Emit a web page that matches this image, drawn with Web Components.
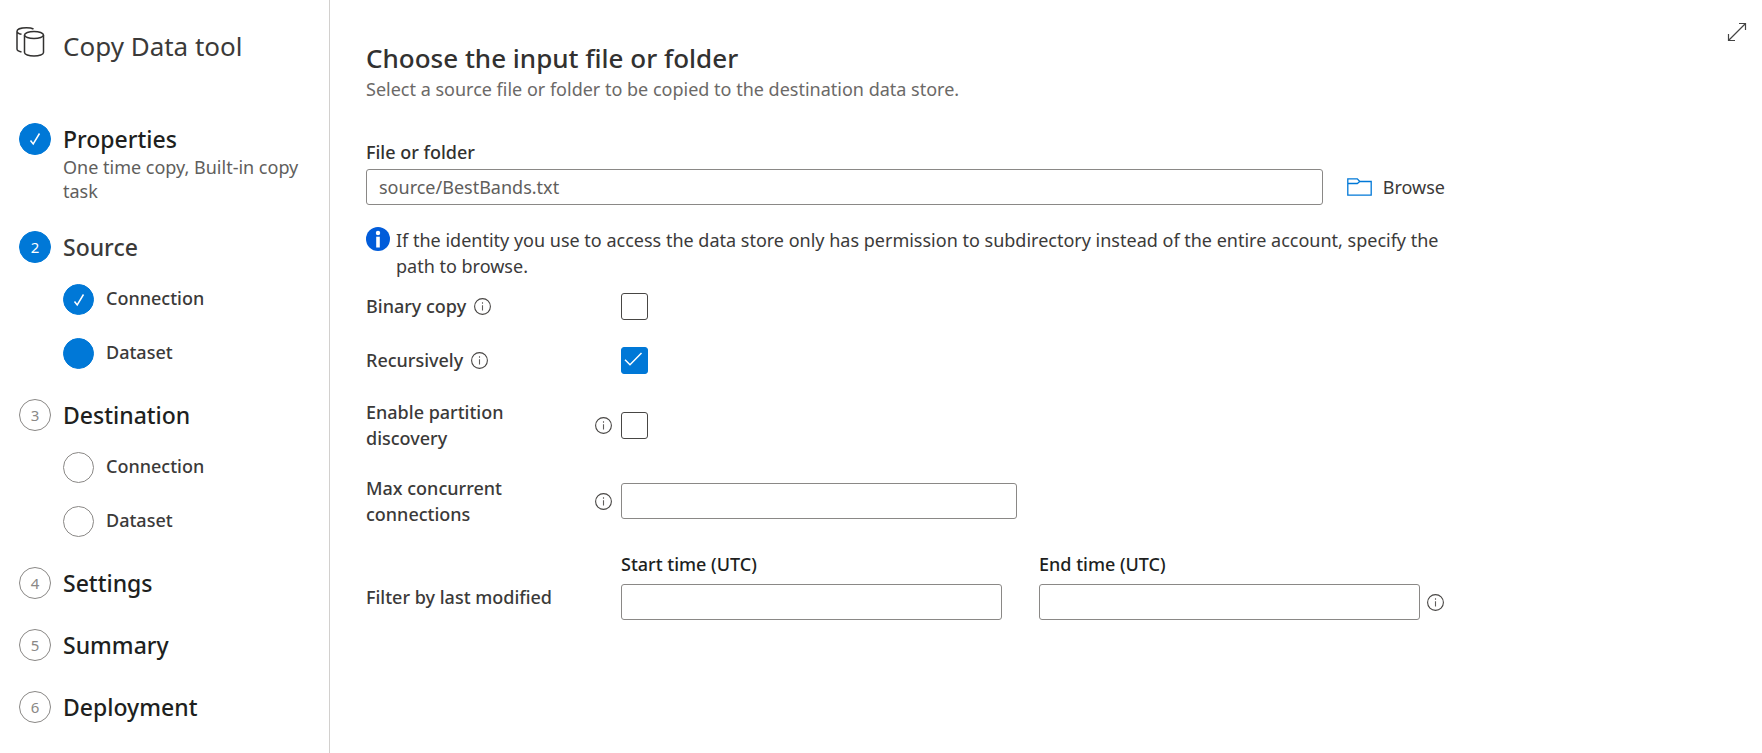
<!DOCTYPE html>
<html lang="en">
<head>
<meta charset="utf-8">
<title>Copy Data tool</title>
<style>
  html, body { margin: 0; background: #fff; }
  body {
    font-family: "Noto Sans", "Open Sans", sans-serif;
    font-size: 18px;
    line-height: 26px;
    color: #3b3a39;
  }
</style>
</head>
<body>
<copy-data-tool>
  <wizard-nav slot="nav" heading="Copy Data tool">
    <wizard-step number="1" state="done" heading="Properties" note="One time copy, Built-in copy task"></wizard-step>
    <wizard-step number="2" state="current" heading="Source">
      <wizard-substep state="done">Connection</wizard-substep>
      <wizard-substep state="current">Dataset</wizard-substep>
    </wizard-step>
    <wizard-step number="3" heading="Destination">
      <wizard-substep>Connection</wizard-substep>
      <wizard-substep>Dataset</wizard-substep>
    </wizard-step>
    <wizard-step number="4" heading="Settings"></wizard-step>
    <wizard-step number="5" heading="Summary"></wizard-step>
    <wizard-step number="6" heading="Deployment"></wizard-step>
  </wizard-nav>

  <page-heading heading="Choose the input file or folder">Select a source file or folder to be copied to the destination data store.</page-heading>
  <path-field label="File or folder" value="source/BestBands.txt"></path-field>
  <info-note>If the identity you use to access the data store only has permission to subdirectory instead of the entire account, specify the path to browse.</info-note>
  <option-rows>
    <check-row label="Binary copy"></check-row>
    <check-row label="Recursively" checked></check-row>
    <check-row label="Enable partition discovery"></check-row>
    <text-row label="Max concurrent connections"></text-row>
    <time-range-row label="Filter by last modified"></time-range-row>
  </option-rows>
</copy-data-tool>

<script>
const TICK = `<svg viewBox="0 0 12 14" width="12" height="14" fill="none" stroke="currentColor" aria-hidden="true"><path d="M1.500 8.500 4.200 12 10.500 1.500" stroke-width="1.500"/></svg>`;
const esc = s => (s || '').replace(/&/g, '&amp;').replace(/</g, '&lt;').replace(/"/g, '&quot;');

class Base extends HTMLElement {
  connectedCallback() {
    if (this.shadowRoot) return;
    this.attachShadow({ mode: 'open' }).innerHTML =
      `<style>*{box-sizing:border-box}:host{display:block;box-sizing:border-box}</style>` + this.render();
  }
  attr(name) { return esc(this.getAttribute(name)); }
}

/* Shared look of a text box */
const INPUT = `
  input[type=text] {
    width: 100%; height: 36px; margin: 0; padding: 0 12px;
    border: 1px solid #8a8886; border-radius: 3px; background: #fff;
    font: inherit; font-weight: 400; color: #605e5c; display: block;
  }`;

/* Shared label column: text with an optional hint icon */
const ROW = `
  :host { display: grid; grid-template-columns: 255px minmax(0, 1fr); align-items: center; font-weight: 500; }
  .name { display: flex; align-items: center; gap: 8px; padding-right: 9px; }
  hint-icon { flex: none; }`;

customElements.define('copy-data-tool', class extends Base {
  render() {
    return `<style>
      :host { display: flex; min-height: 100vh; }
      main { flex: 1; min-width: 0; padding: 41px 16px 42px 36px; }
      .form { max-width: 1091px; }
      .side { flex: none; display: flex; flex-direction: column; padding: 22px 15px 0 0; }
      button { border: 0; background: none; padding: 0; width: 20px; height: 20px; color: #444; display: block; }
      svg { display: block; }
    </style>
    <slot name="nav"></slot>
    <main><div class="form"><slot></slot></div></main>
    <div class="side"><button type="button" aria-label="Expand">
      <svg viewBox="0 0 20 20" width="20" height="20" fill="none" stroke="currentColor" stroke-width="1.2"><path d="M1.5 18.5 18.5 1.5M12 1.5h6.500v6.500M1.500 12v6.500h6.500"/></svg>
    </button></div>`;
  }
});

customElements.define('wizard-nav', class extends Base {
  render() {
    return `<style>
      :host { flex: none; width: 330px; border-right: 1px solid #d2d0ce; padding: 24px 20px 24px 15px; }
      header { display: flex; align-items: center; gap: 17px; height: 44px; }
      h1 { margin: 0; font-size: 26px; line-height: 44px; font-weight: 400; }
      header svg { flex: none; align-self: flex-start; }
      nav { display: grid; gap: 30px; margin: 55px 0 0 4px; }
    </style>
    <header>
      <svg viewBox="0 0 31 36" width="31" height="36" fill="none" stroke="#323130" stroke-width="1.5" aria-hidden="true">
        <ellipse cx="19" cy="11" rx="9.500" ry="3.600"/>
        <path d="M9.500 11v17.500c0 2 4.200 3.600 9.500 3.600s9.500-1.600 9.500-3.600V11"/>
        <path d="M18.500 5C17 4.200 14.500 3.700 11.500 3.700 6 3.700 2 5.200 2 7.200v17.800c0 1.400 1.700 2.400 4.500 3.100M2 7.200c0 1.400 1.700 2.500 4.500 3.100"/>
      </svg>
      <h1>${this.attr('heading')}</h1>
    </header>
    <nav aria-label="Steps"><slot></slot></nav>`;
  }
});

customElements.define('wizard-step', class extends Base {
  render() {
    const note = this.attr('note');
    const done = this.getAttribute('state') === 'done';
    return `<style>
      :host { display: grid; grid-template-columns: 32px minmax(0, 1fr); column-gap: 12px; align-items: start; }
      .dot { width: 32px; height: 32px; border-radius: 50%; border: 1px solid #8a8886; color: #8a8886;
             display: flex; align-items: center; justify-content: center; font-size: 15px; font-weight: 400; }
      :host([state]) .dot { background: #0078d7; border-color: #0078d7; color: #fff; }
      h2 { margin: 0; font-size: 23px; line-height: 32px; font-weight: 500; color: #201f1e; }
      :host([state=current]) h2 { color: #3b3a39; }
      p { margin: 0; margin-bottom: -2px; font-size: 18px; line-height: 24px; color: #605e5c; }
      ::slotted(wizard-substep:first-of-type) { margin-top: 21px; }
      ::slotted(wizard-substep) { margin-top: 23px; }
    </style>
    <span class="dot">${done ? TICK : this.attr('number')}</span>
    <div><h2>${this.attr('heading')}</h2>${note ? `<p>${note}</p>` : ''}<slot></slot></div>`;
  }
});

customElements.define('wizard-substep', class extends Base {
  render() {
    return `<style>
      :host { display: flex; gap: 12px; height: 31px; font-weight: 500; }
      .dot { flex: none; width: 31px; height: 31px; border-radius: 50%; border: 1px solid #8a8886; color: #fff;
             display: flex; align-items: center; justify-content: center; }
      :host([state]) .dot { background: #0078d7; border-color: #0078d7; }
      .text { line-height: 28px; }
    </style>
    <span class="dot">${this.getAttribute('state') === 'done' ? TICK : ''}</span><span class="text"><slot></slot></span>`;
  }
});

customElements.define('hint-icon', class extends Base {
  render() {
    return `<style>:host { width: 17px; height: 17px; } svg { display: block; }</style>
    <svg viewBox="0 0 17 17" width="17" height="17" role="img" aria-label="More information">
      <circle cx="8.500" cy="8.500" r="7.900" fill="none" stroke="#484644" stroke-width="1.100"/>
      <path d="M8.500 7.200v5.300M8.500 4.300v1.400" stroke="#605e5c" stroke-width="1.100"/></svg>`;
  }
});

customElements.define('page-heading', class extends Base {
  render() {
    return `<style>
      h2 { margin: 0; font-size: 26px; line-height: 34px; font-weight: 500; color: #323130; }
      p { margin: 0; padding-top: 1px; color: #6b6967; }
    </style><h2>${this.attr('heading')}</h2><p><slot></slot></p>`;
  }
});

customElements.define('path-field', class extends Base {
  render() {
    return `<style>${INPUT}
      :host { margin-top: 37px; }
      label { display: block; font-weight: 500; margin-bottom: 4px; color: #323130; }
      .line { display: flex; align-items: center; padding-right: 12px; }
      input { flex: 1; min-width: 0; }
      button { flex: none; display: flex; align-items: center; gap: 11px; margin-left: 24px; padding: 0;
               border: 0; background: none; font: inherit; color: inherit; }
    </style>
    <label for="path">${this.attr('label')}</label>
    <div class="line">
      <input id="path" type="text" value="${this.attr('value')}">
      <button type="button">
        <svg viewBox="0 0 25 18" width="25" height="18" fill="none" stroke="#0078d7" stroke-width="1.300" aria-hidden="true"><path d="M.8.800h9.500l2.500 2.700h11.400v13.700H.8zM.8 5.500h9.500l2.500-2"/></svg>
        <span>Browse</span>
      </button>
    </div>`;
  }
});

customElements.define('info-note', class extends Base {
  render() {
    return `<style>
      :host { display: flex; align-items: flex-start; gap: 6px; margin-top: 22px; }
      svg { flex: none; }
    </style>
    <svg viewBox="0 0 24 24" width="24" height="24" aria-hidden="true"><circle cx="12" cy="12" r="12" fill="#015cda"/><circle cx="12" cy="6" r="2.200" fill="#fff"/><path d="M10.200 9.700h3.600v10.800h-3.600z" fill="#fff"/></svg>
    <span><slot></slot></span>`;
  }
});

customElements.define('option-rows', class extends Base {
  render() {
    return `<style>:host { display: grid; gap: 24px; margin-top: 12px; }</style><slot></slot>`;
  }
});

customElements.define('check-row', class extends Base {
  render() {
    return `<style>${ROW}
      :host { min-height: 30px; }
      .box { display: grid; width: 27px; height: 27px; }
      .box > * { grid-area: 1 / 1; }
      input { appearance: none; margin: 0; width: 27px; height: 27px; border: 1px solid #484644; border-radius: 3px; background: #fff; }
      input:checked { background: #0078d7; border-color: #0078d7; }
      svg { visibility: hidden; pointer-events: none; }
      input:checked + svg { visibility: visible; }
    </style>
    <div class="name"><label for="box">${this.attr('label')}</label><hint-icon></hint-icon></div>
    <div class="box"><input id="box" type="checkbox" ${this.hasAttribute('checked') ? 'checked' : ''}>
      <svg viewBox="0 0 27 27" width="27" height="27" fill="none" stroke="#fff" stroke-width="1.500" aria-hidden="true"><path d="M4 12.700 9 17.700 20.500 6"/></svg></div>`;
  }
});

customElements.define('text-row', class extends Base {
  render() {
    return `<style>${ROW}${INPUT} input { max-width: 396px; }</style>
    <div class="name"><label for="text">${this.attr('label')}</label><hint-icon></hint-icon></div>
    <input id="text" type="text">`;
  }
});

customElements.define('time-range-row', class extends Base {
  render() {
    return `<style>${ROW}${INPUT}
      :host { align-items: end; }
      .name { padding-bottom: 10px; }
      .range { display: grid; grid-template-columns: minmax(0, 381px) 37px minmax(0, 381px) 7px 17px; row-gap: 7px; align-items: center; }
      .range label { grid-row: 1; color: #201f1e; }
      .range input { grid-row: 2; }
      .end { grid-column: 3; }
      .range hint-icon { grid-area: 2 / 5; }
    </style>
    <div class="name" id="name">${this.attr('label')}</div>
    <div class="range" role="group" aria-labelledby="name">
      <label for="start">Start time (UTC)</label><input id="start" type="text">
      <label class="end" for="end">End time (UTC)</label><input class="end" id="end" type="text"><hint-icon></hint-icon>
    </div>`;
  }
});
</script>
</body>
</html>
